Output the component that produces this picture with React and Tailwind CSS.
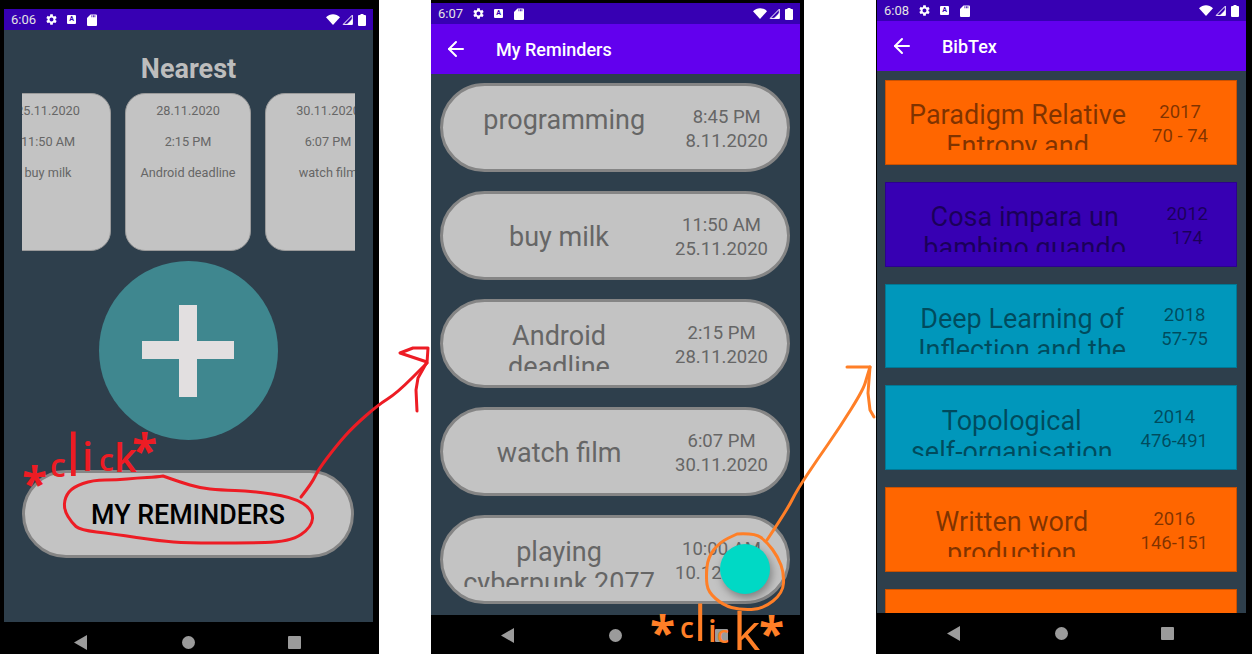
import { ArrowLeft } from "lucide-react";

const reminders = [
    { title: "programming", time: "8:45 PM", date: "8.11.2020", top: true },
    { title: "buy milk", time: "11:50 AM", date: "25.11.2020" },
    { title: "Android deadline", time: "2:15 PM", date: "28.11.2020" },
    { title: "watch film", time: "6:07 PM", date: "30.11.2020" },
    { title: "playing cyberpunk 2077", time: "10:00 AM", date: "10.12.2020" },
];

const bibtex = [
    { title: "Paradigm Relative Entropy and", year: "2017", pages: "70 - 74", color: "bg-[#FF6600]" },
    { title: "Cosa impara un bambino quando", year: "2012", pages: "174", color: "bg-[#3700B3]" },
    { title: "Deep Learning of Inflection and the", year: "2018", pages: "57-75", color: "bg-[#0097BB]" },
    { title: <>Topological <span className="whitespace-nowrap">self-organisation</span></>, year: "2014", pages: "476-491", color: "bg-[#0097BB]" },
    { title: "Written word production", year: "2016", pages: "146-151", color: "bg-[#FF6600]" },
    { title: "", year: "", pages: "", color: "bg-[#FF6600]" },
];

const nearest = [
    { date: "25.11.2020", time: "11:50 AM", title: "buy milk" },
    { date: "28.11.2020", time: "2:15 PM", title: "Android deadline" },
    { date: "30.11.2020", time: "6:07 PM", title: "watch film" },
];

// hand drawn strokes, rounded off through the midpoints
const smooth = (pts) => {
    let d = `M${pts[0][0]} ${pts[0][1]}`;
    for (let i = 1; i < pts.length - 1; i++) {
        const mx = (pts[i][0] + pts[i + 1][0]) / 2;
        const my = (pts[i][1] + pts[i + 1][1]) / 2;
        d += `Q${pts[i][0]} ${pts[i][1]} ${mx} ${my}`;
    }
    const last = pts[pts.length - 1];
    return `${d}L${last[0]} ${last[1]}`;
};

const redLoop = [[163, 476], [157, 477], [137, 478], [117, 480], [93, 480], [73, 487], [65, 497], [64, 510], [72, 523], [80, 530], [113, 534], [160, 541], [187, 543], [240, 543], [290, 542], [312, 527], [313, 510], [293, 497], [250, 491], [220, 490], [200, 488], [180, 482], [163, 476]];
const redArrow = [[301, 497], [312, 483], [318, 470], [337, 445], [353, 427], [378, 405], [397, 393], [427, 363]];
const orangeLoop = [[737, 534], [755, 533], [767, 542], [778, 557], [784, 573], [783, 593], [763, 609], [740, 610], [723, 605], [708, 592], [706, 577], [708, 557], [720, 542], [737, 534]];
const orangeArrow = [[767, 540], [787, 510], [797, 490], [817, 460], [840, 427], [863, 390], [867, 377], [870, 367]];

function StatusBar({ time }) {
    return (
        <div className="flex h-[21px] shrink-0 items-center bg-[#3700B3] pl-[7px] pr-[7px] text-[#e4e4e4]">
            <span className="w-[24px] text-[13px] leading-none">{time}</span>
            <svg viewBox="0 0 24 24" className="ml-[10px] h-[13px] w-[13px] fill-white">
                <path d="M19.14 12.94c.04-.3.06-.61.06-.94 0-.32-.02-.64-.07-.94l2.03-1.58c.18-.14.23-.41.12-.61l-1.92-3.32c-.12-.22-.37-.29-.59-.22l-2.39.96c-.5-.38-1.03-.7-1.62-.94l-.36-2.54c-.04-.24-.24-.41-.48-.41h-3.84c-.24 0-.43.17-.47.41l-.36 2.54c-.59.24-1.13.57-1.62.94l-2.39-.96c-.22-.08-.47 0-.59.22L2.74 8.87c-.12.21-.08.47.12.61l2.03 1.58c-.05.3-.09.63-.09.94s.02.64.07.94l-2.03 1.58c-.18.14-.23.41-.12.61l1.92 3.32c.12.22.37.29.59.22l2.39-.96c.5.38 1.03.7 1.62.94l.36 2.54c.05.24.24.41.48.41h3.84c.24 0 .44-.17.47-.41l.36-2.54c.59-.24 1.13-.56 1.62-.94l2.39.96c.22.08.47 0 .59-.22l1.92-3.32c.12-.22.07-.47-.12-.61l-2.01-1.58zM12 15.6c-1.98 0-3.6-1.62-3.6-3.6s1.62-3.6 3.6-3.6 3.6 1.62 3.6 3.6-1.62 3.6-3.6 3.6z" />
            </svg>
            <span className="ml-[9px] flex h-[9px] w-[9px] items-center justify-center rounded-[1px] bg-white text-[7px] font-bold leading-none text-[#3700B3]">A</span>
            <svg viewBox="0 0 10 12" className="ml-[11px] h-[12px] w-[10px] fill-white">
                <path d="M3.5 0.5H9a1 1 0 0 1 1 1V11a1 1 0 0 1-1 1H1a1 1 0 0 1-1-1V4Z" />
                <path d="M4.5 1.3h.8v2h-.8zM6 1.3h.8v2H6zM7.5 1.3h.8v2h-.8z" className="fill-[#3700B3]" />
            </svg>
            <svg viewBox="0 0 14 11" className="ml-auto h-[11px] w-[14px] fill-white">
                <path d="M7 11 0 3.2C4-.9 10-.9 14 3.2Z" />
            </svg>
            <svg viewBox="0 0 11 11" className="ml-[2px] h-[11px] w-[11px] fill-none stroke-white">
                <path d="M10.3 1.2V10.4H1.2Z" strokeWidth="1" />
                <path d="M5 10.4 10.3 5V10.4Z" className="fill-white" strokeWidth="0.4" />
            </svg>
            <svg viewBox="0 0 8 12" className="ml-[5px] h-[12px] w-[8px] fill-white">
                <path d="M2.5 0h3v1H7a1 1 0 0 1 1 1v9a1 1 0 0 1-1 1H1a1 1 0 0 1-1-1V2a1 1 0 0 1 1-1h1.5Z" />
            </svg>
        </div>
    );
}

function NavBar({ className }) {
    return (
        <div className={`flex flex-1 items-center justify-center bg-black pr-[2px] ${className}`}>
            <svg viewBox="0 0 13 15" className="mr-[95px] h-[15px] w-[13px] fill-[#9b9b9b]">
                <path d="M13 0V15L0 7.5Z" />
            </svg>
            <span className="mr-[93px] h-[13px] w-[13px] rounded-full bg-[#9b9b9b]"></span>
            <span className="h-[13px] w-[13px] rounded-[1px] bg-[#9b9b9b]"></span>
        </div>
    );
}

function Toolbar({ title }) {
    return (
        <div className="flex h-[50px] shrink-0 items-center bg-[#6200EE] pl-[13px] text-white">
            <ArrowLeft className="h-[24px] w-[24px]" strokeWidth={2} />
            <span className="ml-[28px] pt-[2px] text-[18px] font-medium leading-none">{title}</span>
        </div>
    );
}

function HomeScreen() {
    return (
        <div className="flex h-[654px] w-[379px] shrink-0 flex-col bg-black pl-[4px] pr-[6px] pt-[9px]">
            <StatusBar time="6:06" />
            <main className="flex h-[592px] shrink-0 flex-col bg-[#2E3F4C]">
                <h1 className="mt-[23px] text-center text-[27px] font-bold leading-[32px] text-[#BDBDBD]">Nearest</h1>
                <div className="ml-[18px] mt-[8px] flex w-[333px] gap-[14px] overflow-hidden">
                    {nearest.map((item, i) => (
                        <div
                            key={item.date}
                            className={`flex h-[158px] w-[126px] shrink-0 flex-col items-center gap-[14px] whitespace-nowrap rounded-[20px] border border-[#9a9a9a] bg-[#C3C3C3] pt-[8px] text-[12.7px] leading-[17px] text-[#666] ${i === 0 ? "-ml-[37px]" : ""}`}
                        >
                            <span>{item.date}</span>
                            <span>{item.time}</span>
                            <span>{item.title}</span>
                        </div>
                    ))}
                </div>
                <div className="mx-auto mt-[10px] flex h-[179px] w-[179px] items-center justify-center rounded-full bg-[#3F878F] pr-[2px]">
                    <svg viewBox="0 0 92 92" className="h-[92px] w-[92px] fill-[#E2DFE0]">
                        <path d="M37 0H55V36H92V54H55V92H37V54H0V36H37Z" />
                    </svg>
                </div>
                <button className="ml-[18px] mt-[30px] h-[88px] w-[332px] rounded-full border-[3px] border-[#858585] bg-[#C3C3C3] pt-[3px] text-[26.8px] font-medium text-black">
                    MY REMINDERS
                </button>
            </main>
            <NavBar className="pt-[9px]" />
        </div>
    );
}

function RemindersScreen() {
    return (
        <div className="relative ml-[52px] flex h-[654px] w-[373px] shrink-0 flex-col bg-black pr-[4px] pt-[3px]">
            <StatusBar time="6:07" />
            <Toolbar title="My Reminders" />
            <main className="flex h-[541px] shrink-0 flex-col gap-[19px] overflow-hidden bg-[#2E3F4C] px-[9px] pt-[9px]">
                {reminders.map((r) => (
                    <div key={r.date} className="flex h-[89px] w-[350px] shrink-0 items-center rounded-full border-[3px] border-[#858585] bg-[#C3C3C3] pl-[18px] pr-[19px] text-[#666]">
                        <div className={`mt-[4px] flex h-[50px] min-w-0 flex-1 flex-col overflow-hidden text-center text-[27px] leading-[31px] ${r.top ? "justify-start" : "[justify-content:safe_center]"}`}>
                            <span>{r.title}</span>
                        </div>
                        <div className="ml-[18px] mt-[3px] flex shrink-0 flex-col items-center text-[18.5px] leading-[24px]">
                            <span>{r.time}</span>
                            <span>{r.date}</span>
                        </div>
                    </div>
                ))}
            </main>
            <NavBar className="pt-[2px]" />
            <span className="absolute bottom-[60px] right-[34px] h-[50px] w-[50px] rounded-full bg-[#00D9C5] shadow-[2px_4px_8px_rgba(0,0,0,0.35)]"></span>
        </div>
    );
}

function BibtexScreen() {
    return (
        <div className="ml-[72px] flex h-[654px] w-[376px] shrink-0 flex-col bg-black pl-[1px] pr-[6px]">
            <StatusBar time="6:08" />
            <Toolbar title="BibTex" />
            <main className="flex h-[542px] shrink-0 flex-col gap-[17px] overflow-hidden bg-[#2E3F4C] px-[8px] pt-[9px]">
                {bibtex.map((b, i) => (
                    <div key={i} className={`flex h-[84.75px] w-[352px] shrink-0 items-center border border-black/20 pl-[12px] pr-[28px] text-black/50 ${b.color}`}>
                        <div className="mt-[6px] h-[50px] min-w-0 flex-1 overflow-hidden px-[8px] text-center text-[27px] leading-[31px]">{b.title}</div>
                        <div className="ml-[15px] mt-[3px] flex shrink-0 flex-col items-center text-[18.5px] leading-[24px]">
                            <span>{b.year}</span>
                            <span>{b.pages}</span>
                        </div>
                    </div>
                ))}
            </main>
            <NavBar />
        </div>
    );
}

function Annotations() {
    return (
        <>
            <svg viewBox="0 0 1252 654" className="absolute left-0 top-0 h-[654px] w-[1252px] fill-none" strokeLinecap="round" strokeLinejoin="round" strokeWidth="3">
                <g className="stroke-[#ED1C24]">
                    <path d={smooth(redLoop)} />
                    <path d={smooth(redArrow)} />
                    <path d="M427 363L428 348L413 348L400 353L427 362L418 378L416 390L417 411" />
                </g>
                <g className="stroke-[#FF7F27]">
                    <path d={smooth(orangeLoop)} />
                    <path d={smooth(orangeArrow)} />
                    <path d="M870 367L847 367M870 367L868 393L870 410L874 417" />
                </g>
            </svg>
            <div className="pointer-events-none absolute left-0 top-0 font-['Open_Sans',sans-serif] leading-none text-[#ED1C24]">
                <span className="absolute left-[22px] top-[460px] text-[46px] font-bold">*</span>
                <span className="absolute left-[50px] top-[449px] text-[32px] font-semibold">c</span>
                <span className="absolute left-[66px] top-[425px] text-[58px]">l</span>
                <span className="absolute left-[82px] top-[436px] text-[40px] font-semibold">i</span>
                <span className="absolute left-[99px] top-[445px] text-[30px] font-semibold">c</span>
                <span className="absolute left-[114px] top-[437px] text-[40px] font-semibold">k</span>
                <span className="absolute left-[132px] top-[427px] text-[46px] font-bold">*</span>
            </div>
            <div className="pointer-events-none absolute left-0 top-0 font-['Open_Sans',sans-serif] leading-none text-[#FF7F27]">
                <span className="absolute left-[650px] top-[609px] text-[46px] font-bold">*</span>
                <span className="absolute left-[680px] top-[613px] text-[28px] font-semibold">c</span>
                <span className="absolute left-[694px] top-[598px] text-[49px]">l</span>
                <span className="absolute left-[708px] top-[615px] text-[31px] font-semibold">i</span>
                <span className="absolute left-[717px] top-[622px] text-[24px] font-semibold">c</span>
                <span className="absolute left-[733px] top-[604px] text-[52px]">k</span>
                <span className="absolute left-[759px] top-[610px] text-[46px] font-bold">*</span>
            </div>
        </>
    );
}

export default function App() {
    return (
        <div className="relative flex h-[654px] w-[1252px] overflow-hidden bg-white font-['Roboto',sans-serif]">
            <HomeScreen />
            <RemindersScreen />
            <BibtexScreen />
            <Annotations />
        </div>
    );
}
